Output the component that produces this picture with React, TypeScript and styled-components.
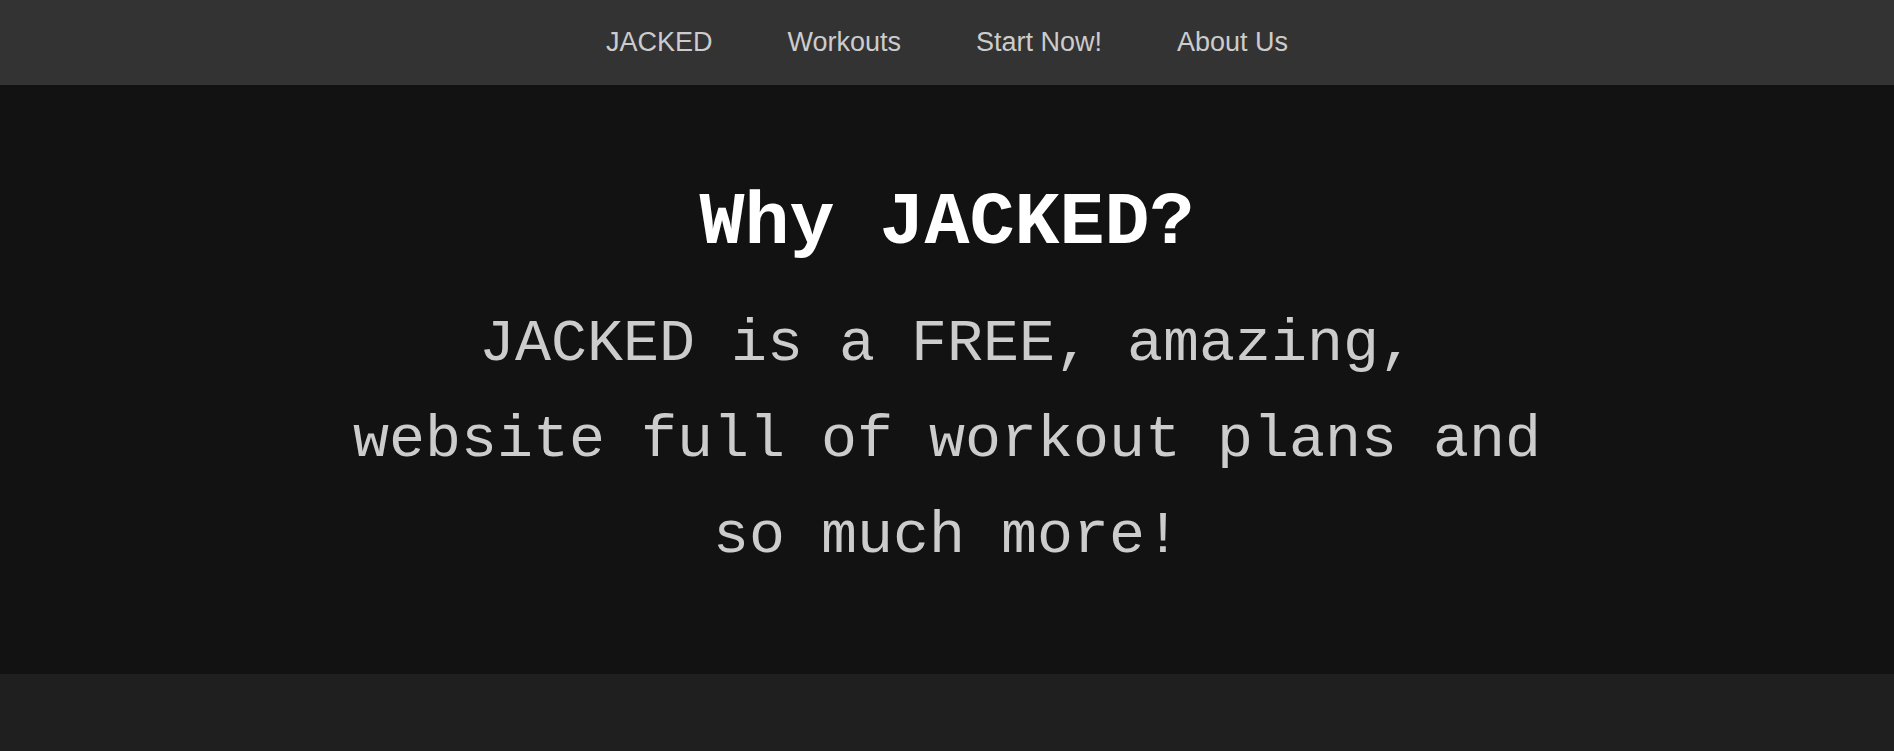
import React from "react";
import styled, { createGlobalStyle } from "styled-components";

const GlobalStyle = createGlobalStyle`
  html, body {
    margin: 0;
    padding: 0;
    background: #1f1f1f;
  }
  * { box-sizing: border-box; }
`;

const monoStack = `"Courier New", "Nimbus Mono PS", "Nimbus Mono L", "FreeMono", Courier, "Liberation Mono", monospace`;

const NavBar = styled.nav`
  height: 85px;
  background: #333333;
  display: flex;
  justify-content: center;
  align-items: center;
  gap: 75px;
`;

const NavLink = styled.a`
  font-family: "Liberation Sans", Arial, sans-serif;
  font-size: 27px;
  color: #cccccc;
  text-decoration: none;
  line-height: 1;
`;

const Hero = styled.section`
  background: #121212;
  padding: 96px 0 90px;
  display: flex;
  flex-direction: column;
  align-items: center;
`;

const Title = styled.h1`
  margin: 0 0 30px;
  font-family: ${monoStack};
  font-weight: bold;
  font-size: 75px;
  color: #ffffff;
  text-align: center;
`;

const Blurb = styled.p`
  margin: 0;
  width: 1200px;
  font-family: ${monoStack};
  font-size: 60px;
  line-height: 96px;
  color: #cccccc;
  text-align: center;
`;

const links = ["JACKED", "Workouts", "Start Now!", "About Us"];

export default function App() {
  return (
    <>
      <GlobalStyle />
      <NavBar>
        {links.map((l) => (
          <NavLink key={l} href="#">
            {l}
          </NavLink>
        ))}
      </NavBar>
      <Hero>
        <Title>Why JACKED?</Title>
        <Blurb>
          JACKED is a FREE, amazing, website full of workout plans and so much
          more!
        </Blurb>
      </Hero>
    </>
  );
}
